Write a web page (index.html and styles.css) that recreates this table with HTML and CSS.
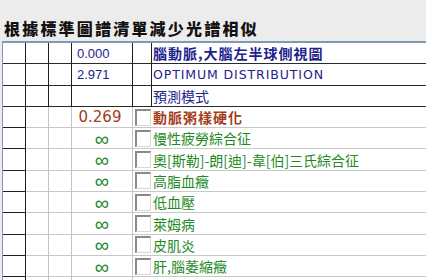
FILE: index.html
```html
<!DOCTYPE html>
<html>
<head>
<meta charset="utf-8">
<link rel="stylesheet" href="styles.css">
</head>
<body>
<h1 class="title">根據標準圖譜清單減少光譜相似</h1>
<div class="grid">
  <div class="row top">
    <div class="c c1"></div><div class="c c2"></div><div class="c c3"></div>
    <div class="c c4 num blue">0.000</div><div class="c c5"></div>
    <div class="c c6 name blue bold">腦動脈,大腦左半球側視圖</div>
  </div>
  <div class="row top">
    <div class="c c1"></div><div class="c c2"></div><div class="c c3"></div>
    <div class="c c4 num blue">2.971</div><div class="c c5"></div>
    <div class="c c6 name blue latin">OPTIMUM DISTRIBUTION</div>
  </div>
  <div class="row top">
    <div class="c c1"></div><div class="c c2"></div><div class="c c3"></div>
    <div class="c c4 num blue"></div><div class="c c5"></div>
    <div class="c c6 name blue">預測模式</div>
  </div>
  <div class="row sub">
    <div class="c c1"></div><div class="c c2"></div><div class="c c3"></div>
    <div class="c c4 score brown">0.269</div><div class="c c5"><span class="box"></span></div>
    <div class="c c6 name brown bold">動脈粥樣硬化</div>
  </div>
  <div class="row sub">
    <div class="c c1"></div><div class="c c2"></div><div class="c c3"></div>
    <div class="c c4 inf green">∞</div><div class="c c5"><span class="box"></span></div>
    <div class="c c6 name green">慢性疲勞綜合征</div>
  </div>
  <div class="row sub">
    <div class="c c1"></div><div class="c c2"></div><div class="c c3"></div>
    <div class="c c4 inf green">∞</div><div class="c c5"><span class="box"></span></div>
    <div class="c c6 name green">奧[斯勒]-朗[迪]-韋[伯]三氏綜合征</div>
  </div>
  <div class="row sub">
    <div class="c c1"></div><div class="c c2"></div><div class="c c3"></div>
    <div class="c c4 inf green">∞</div><div class="c c5"><span class="box"></span></div>
    <div class="c c6 name green">高脂血癥</div>
  </div>
  <div class="row sub">
    <div class="c c1"></div><div class="c c2"></div><div class="c c3"></div>
    <div class="c c4 inf green">∞</div><div class="c c5"><span class="box"></span></div>
    <div class="c c6 name green">低血壓</div>
  </div>
  <div class="row sub">
    <div class="c c1"></div><div class="c c2"></div><div class="c c3"></div>
    <div class="c c4 inf green">∞</div><div class="c c5"><span class="box"></span></div>
    <div class="c c6 name green">萊姆病</div>
  </div>
  <div class="row sub">
    <div class="c c1"></div><div class="c c2"></div><div class="c c3"></div>
    <div class="c c4 inf green">∞</div><div class="c c5"><span class="box"></span></div>
    <div class="c c6 name green">皮肌炎</div>
  </div>
  <div class="row sub">
    <div class="c c1"></div><div class="c c2"></div><div class="c c3"></div>
    <div class="c c4 inf green">∞</div><div class="c c5"><span class="box"></span></div>
    <div class="c c6 name green">肝,腦萎縮癥</div>
  </div>
  <div class="row sub">
    <div class="c c1"></div><div class="c c2"></div><div class="c c3"></div>
    <div class="c c4 inf green"></div><div class="c c5"></div>
    <div class="c c6 name green"></div>
  </div>
</div>
</body>
</html>
```
FILE: styles.css
```css
html, body {
  margin: 0;
  padding: 0;
  background: #ececec;
  overflow: hidden;
}
body {
  width: 426px;
  height: 280px;
  font-family: "DejaVu Sans", "Noto Sans CJK TC", sans-serif;
}
.title {
  margin: 0;
  padding: 17px 0 0 4px;
  height: 24px;
  font-family: "Noto Sans CJK TC", sans-serif;
  font-size: 16px;
  line-height: 22px;
  font-weight: 900;
  letter-spacing: 2.2px;
  color: #111;
}
.grid {
  margin-left: 2px;
  border-left: 1px solid #7f99b4;
  border-top: 2px solid #7f99b4;
  background: #fff;
  width: 440px;
}
.row {
  display: grid;
  grid-template-columns: 23px 23px 23px 61px 19px 1fr;
  height: 21.3px;
}
.c {
  box-sizing: border-box;
  border-right: 1px solid #1e1e1e;
  border-bottom: 1.5px solid #2a2a2a;
  display: flex;
  align-items: center;
  white-space: nowrap;
  overflow: hidden;
}
.sub .c {
  border-right-color: #c4c4c4;
  border-bottom-color: #c8c8c8;
}
.sub .c1 {
  border-right: 1.5px solid #1e1e1e;
  border-bottom-color: #1e1e1e;
}
.sub .c5 { border-right: none; }
.num {
  font-family: "Liberation Sans", sans-serif;
  font-size: 13px;
  padding-left: 5px;
}
.score {
  justify-content: center;
  font-size: 15px;
  padding-right: 4px;
}
.inf {
  justify-content: center;
  font-family: "Liberation Sans", sans-serif;
  font-size: 20px;
  padding-top: 2px;
}
.name {
  padding-left: 1px;
  font-family: "Noto Sans CJK TC", sans-serif;
  font-size: 14px;
}
.name.latin {
  font-family: "DejaVu Sans", sans-serif;
  font-size: 12.5px;
  letter-spacing: 0.9px;
}
.bold {
  font-weight: bold;
  letter-spacing: 1px;
}
.blue { color: #22228c; }
.brown { color: #a33c18; }
.green { color: #1f8a1f; }
.c5 { justify-content: center; }
.box {
  box-sizing: border-box;
  width: 16px;
  height: 17px;
  background: #fff;
  border-top: 2px solid #8a8a8a;
  border-left: 2px solid #8a8a8a;
  border-right: 1px solid #d8d8d8;
  border-bottom: 1px solid #d8d8d8;
}
```
